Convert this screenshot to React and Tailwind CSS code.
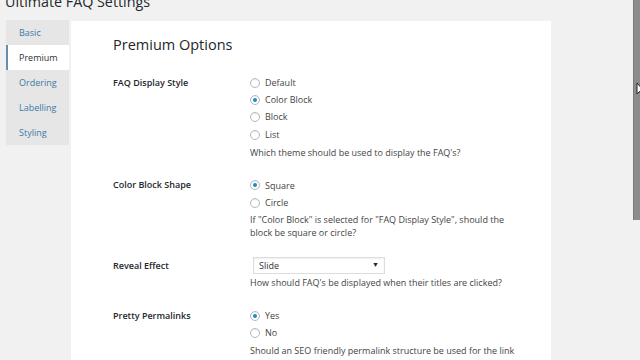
import React from "react";

const navItems = ["Basic", "Premium", "Ordering", "Labelling", "Styling"];

function Radio({ label, checked }) {
  return (
    <div className="flex items-center h-[17.3px]">
      <span className="w-[10px] h-[10px] rounded-full border border-[#b4b9be] bg-white flex items-center justify-center shadow-[inset_0_1px_1px_rgba(0,0,0,0.08)]">
        {checked && <span className="w-[4px] h-[4px] rounded-full bg-[#1e8cbe]" />}
      </span>
      <span className="ml-[5px] text-[9px] text-[#444]">{label}</span>
    </div>
  );
}

function Desc({ children, className = "" }) {
  return <p className={"text-[9px] leading-[13px] text-[#444] " + className}>{children}</p>;
}

function Row({ label, children, className = "" }) {
  return (
    <div className={"flex " + className}>
      <div className="w-[137px] h-[17px] flex items-center text-[9px] font-semibold text-[#23282d]">{label}</div>
      <div className="flex flex-col">{children}</div>
    </div>
  );
}

export default function App() {
  return (
    <div className="relative w-[640px] h-[360px] overflow-hidden bg-[#f1f1f1] font-['Open_Sans',sans-serif]">
      <h1 className="absolute left-[5px] top-[-8px] text-[14.3px] leading-[20px] text-[#23282d]">Ultimate FAQ Settings</h1>

      <div className="flex items-start pt-[20px] pl-[6px]">
        <div className="w-[63px] bg-[#e6e6e6] flex flex-col">
          {navItems.map((item) =>
            item === "Premium" ? (
              <div key={item} className="h-[25px] flex items-center bg-white border-l-2 border-[#6b8ea8] pl-[11px] text-[9px] text-[#333]">
                {item}
              </div>
            ) : (
              <div key={item} className="h-[25px] flex items-center pl-[13px] text-[9px] text-[#3c7aa6]">
                {item}
              </div>
            )
          )}
        </div>

        <div className="ml-[2px] mt-[1px] w-[480px] h-[400px] bg-white pl-[42px] pt-[12px]">
          <h2 className="text-[14.5px] leading-[24px] text-[#23282d] h-[24px] flex items-center">Premium Options</h2>

          <Row label="FAQ Display Style" className="mt-[17px]">
            <Radio label="Default" />
            <Radio label="Color Block" checked />
            <Radio label="Block" />
            <Radio label="List" />
            <Desc className="mt-[2.5px] w-[262px]">Which theme should be used to display the FAQ's?</Desc>
          </Row>

          <Row label="Color Block Shape" className="mt-[18px]">
            <Radio label="Square" checked />
            <Radio label="Circle" />
            <Desc className="mt-[2px] w-[262px]">If "Color Block" is selected for "FAQ Display Style", should the block be square or circle?</Desc>
          </Row>

          <Row label="Reveal Effect" className="mt-[17.5px]">
            <div className="ml-[3px] w-[132px] h-[17px] border border-[#ddd] bg-white flex items-center justify-between px-[5px] shadow-[inset_0_1px_2px_rgba(0,0,0,0.07)]">
              <span className="text-[9px] text-[#333]">Slide</span>
              <span className="text-[7px] text-[#222]">▼</span>
            </div>
            <Desc className="mt-[2px] w-[262px]">How should FAQ's be displayed when their titles are clicked?</Desc>
          </Row>

          <Row label="Pretty Permalinks" className="mt-[18.5px]">
            <Radio label="Yes" checked />
            <Radio label="No" />
            <Desc className="mt-[2px] w-[272px]">Should an SEO friendly permalink structure be used for the link to this FAQ?</Desc>
          </Row>
        </div>
      </div>

      <div className="absolute right-0 top-0 w-[7px] h-[220px] bg-[#8c8c8c] border-l border-[#7a7a7a]" />
      <svg className="absolute left-[636px] top-[82px]" width="8" height="14" viewBox="0 0 8 14">
        <path d="M1 1 L1 12 L3.5 9.5 L5.5 13 L7 12.3 L5 9 L8 9 Z" fill="#fff" stroke="#222" strokeWidth="1" />
      </svg>
    </div>
  );
}
